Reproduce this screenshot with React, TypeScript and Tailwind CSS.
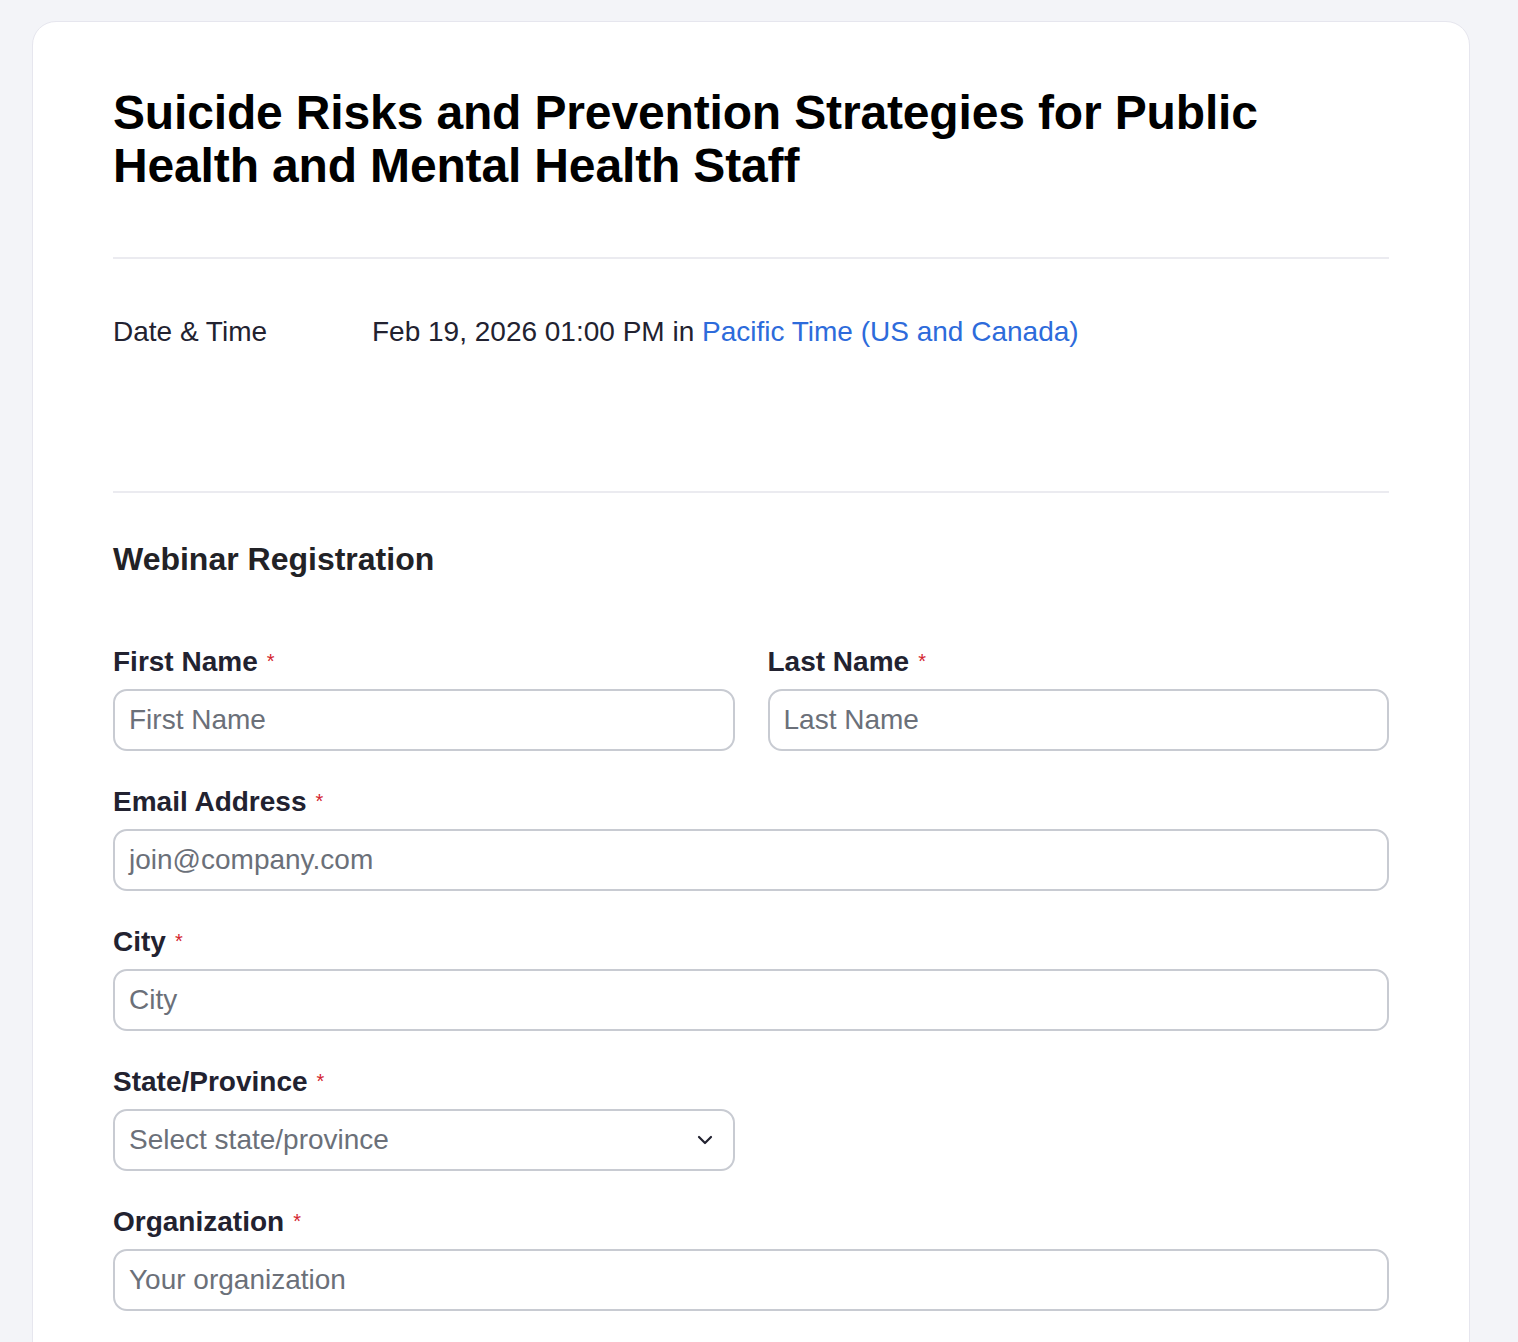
import React from "react";
import { ChevronDown } from "lucide-react";

const font = { fontFamily: '"Liberation Sans", Arial, Helvetica, sans-serif' };

function Label({ text }: { text: string }) {
  return (
    <div className="flex items-start h-[40px] leading-[40px]">
      <span className="text-[28px] font-bold text-[#222230]">{text}</span>
      <span className="ml-[9px] text-[20px] leading-[38px] text-[#d4252f]">*</span>
    </div>
  );
}

function Input({ placeholder }: { placeholder: string }) {
  return (
    <div className="mt-[7px] h-[62px] rounded-[14px] border-2 border-[#c8cbd2] bg-white flex items-center px-[14px]">
      <span className="text-[28px] text-[#6b7079]">{placeholder}</span>
    </div>
  );
}

function Field({ label, placeholder }: { label: string; placeholder: string }) {
  return (
    <div>
      <Label text={label} />
      <Input placeholder={placeholder} />
    </div>
  );
}

export default function App() {
  return (
    <div style={font} className="min-h-screen bg-[#f3f4f8] pt-[21px] pl-[32px] pr-[48px]">
      <div className="rounded-t-[24px] border border-[#e6e6ee] bg-white px-[80px] pt-[65px] pb-[120px]">
        <h1 className="text-[48px] leading-[52.8px] font-bold tracking-[-0.15px] text-black">
          Suicide Risks and Prevention Strategies for Public
          <br />
          Health and Mental Health Staff
        </h1>
        <div className="mt-[64px] h-[2px] bg-[#ebebf0]" />
        <div className="pt-[53px] flex text-[28px] leading-[40px] text-[#222230]">
          <div className="w-[259px] shrink-0">Date &amp; Time</div>
          <div>
            Feb 19, 2026 01:00 PM in{" "}
            <span className="text-[#2d6bdb]">Pacific Time (US and Canada)</span>
          </div>
        </div>
        <div className="mt-[139px] h-[2px] bg-[#ebebf0]" />
        <h2 className="mt-[44px] text-[32px] leading-[44px] font-bold text-[#222226]">
          Webinar Registration
        </h2>
        <div className="mt-[61px] flex flex-col gap-[31px]">
          <div className="grid grid-cols-2 gap-x-[33px]">
            <Field label="First Name" placeholder="First Name" />
            <Field label="Last Name" placeholder="Last Name" />
          </div>
          <Field label="Email Address" placeholder="join@company.com" />
          <Field label="City" placeholder="City" />
          <div className="grid grid-cols-2 gap-x-[33px]">
            <div>
              <Label text="State/Province" />
              <div className="mt-[7px] h-[62px] rounded-[14px] border-2 border-[#c8cbd2] bg-white flex items-center justify-between pl-[14px] pr-[16px]">
                <span className="text-[28px] text-[#6b7079]">Select state/province</span>
                <ChevronDown size={24} strokeWidth={2.2} className="text-[#222230]" />
              </div>
            </div>
          </div>
          <Field label="Organization" placeholder="Your organization" />
        </div>
      </div>
    </div>
  );
}
